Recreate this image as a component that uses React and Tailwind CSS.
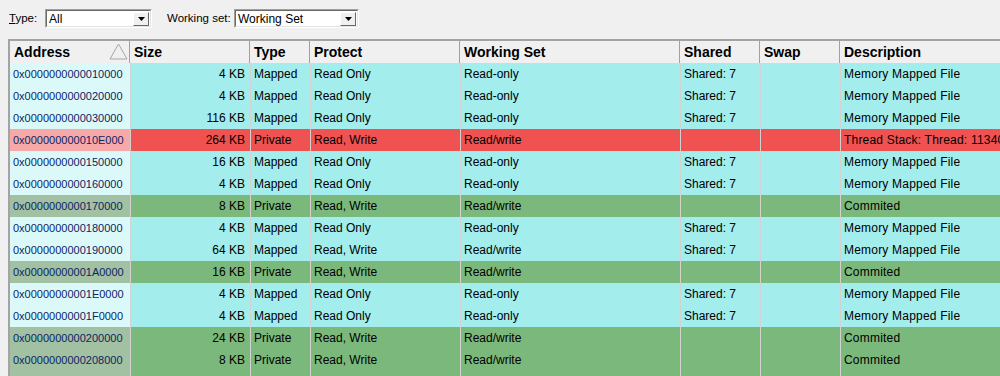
import React from 'react'

const columns = [
	{ key: 'address', label: 'Address', w: 'w-[120px]' },
	{ key: 'size', label: 'Size', w: 'w-[120px]' },
	{ key: 'type', label: 'Type', w: 'w-[60px]' },
	{ key: 'protect', label: 'Protect', w: 'w-[150px]' },
	{ key: 'ws', label: 'Working Set', w: 'w-[220px]' },
	{ key: 'shared', label: 'Shared', w: 'w-[80px]' },
	{ key: 'swap', label: 'Swap', w: 'w-[80px]' },
	{ key: 'desc', label: 'Description', w: 'w-[260px]' },
]

const mapped = (address, size, ro = true) => ({
	kind: 'mapped', address, size, type: 'Mapped',
	protect: ro ? 'Read Only' : 'Read, Write',
	ws: ro ? 'Read-only' : 'Read/write',
	shared: 'Shared: 7', desc: 'Memory Mapped File',
})

const priv = (address, size) => ({
	kind: 'private', address, size, type: 'Private',
	protect: 'Read, Write', ws: 'Read/write', shared: '', desc: 'Commited',
})

const rows = [
	mapped('0x0000000000010000', '4 KB'),
	mapped('0x0000000000020000', '4 KB'),
	mapped('0x0000000000030000', '116 KB'),
	{ kind: 'stack', address: '0x000000000010E000', size: '264 KB', type: 'Private', protect: 'Read, Write', ws: 'Read/write', shared: '', desc: 'Thread Stack: Thread: 11340 Main thread' },
	mapped('0x0000000000150000', '16 KB'),
	mapped('0x0000000000160000', '4 KB'),
	priv('0x0000000000170000', '8 KB'),
	mapped('0x0000000000180000', '4 KB'),
	mapped('0x0000000000190000', '64 KB', false),
	priv('0x00000000001A0000', '16 KB'),
	mapped('0x00000000001E0000', '4 KB'),
	mapped('0x00000000001F0000', '4 KB'),
	priv('0x0000000000200000', '24 KB'),
	priv('0x0000000000208000', '8 KB'),
	// only the top edge of this one shows, its text sits below the window
	{ kind: 'private', address: '', size: '', type: '', protect: '', ws: '', shared: '', desc: '' },
]

const rowBg = {
	mapped: 'bg-[#a3eded]',
	stack: 'bg-[#f05252]',
	private: 'bg-[#7bb87b]',
}

const addrBg = {
	mapped: 'bg-[#dcf9f9]',
	stack: 'bg-[#f7a9a9]',
	private: 'bg-[#a2c0a2]',
}

function Select({ value, width }) {
	return (
		<div className={`${width} shrink-0 h-[19px] bg-white border border-t-[#a0a0a0] border-l-[#a0a0a0] border-b-white border-r-white flex items-center`}>
			<div className="flex-1 h-full border border-t-[#696969] border-l-[#696969] border-b-[#e3e3e3] border-r-[#e3e3e3] flex items-center pl-[2px] pr-[1px]">
				<span className="flex-1 text-[12px] text-black leading-none">{value}</span>
				<div className="w-[16px] h-[14px] bg-[#f0f0f0] border border-t-white border-l-white border-b-[#696969] border-r-[#696969] flex items-center justify-center">
					<svg width="7" height="4" viewBox="0 0 7 4"><polygon points="0,0 7,0 3.5,4" fill="#000" /></svg>
				</div>
			</div>
		</div>
	)
}

export default function App() {
	return (
		<div className="w-[1000px] h-[376px] bg-[#f0f0f0] overflow-hidden" style={{ fontFamily: '"Liberation Sans", Arial, sans-serif' }}>
			{/* toolbar */}
			<div className="h-[39px] flex items-center pl-[9px] pb-[2px] text-[11.5px] text-black">
				<span className="w-[36px] shrink-0"><u>T</u>ype:</span>
				<Select value="All" width="w-[107px]" />
				<span className="w-[67px] shrink-0 ml-[15px]">Working set:</span>
				<Select value="Working Set" width="w-[125px]" />
			</div>

			{/* list */}
			<div className="ml-[8px] border-t-2 border-l-2 border-[#a3a3a3] overflow-hidden">
				<div className="flex h-[22px] bg-[#f0f0f0]">
					{columns.map(col => (
						<div key={col.key} className={`${col.w} shrink-0 relative flex items-center pl-[4px] border-r border-[#a0a0a0] text-[14px] font-bold text-black`}>
							{col.label}
							{col.key === 'address' && (
								<svg className="absolute right-[1px] top-[2px]" width="19" height="17" viewBox="0 0 19 17">
									<polygon points="9.5,1 18,16 1,16" fill="none" stroke="#a7a7a7" strokeWidth="1" />
								</svg>
							)}
						</div>
					))}
				</div>

				{rows.map((r, i) => (
					<div key={i} className={`flex h-[22px] text-[12px] text-black ${rowBg[r.kind]}`}>
						<div className={`w-[120px] shrink-0 flex items-center pl-[3px] text-[11px] text-[#0c2466] ${addrBg[r.kind]}`}>{r.address}</div>
						<div className="w-[120px] shrink-0 flex items-center justify-end pr-[5px] border-l border-[#d2d2d2]">{r.size}</div>
						<div className="w-[60px] shrink-0 flex items-center pl-[3px] border-l border-[#d2d2d2]">{r.type}</div>
						<div className="w-[150px] shrink-0 flex items-center pl-[3px] border-l border-[#d2d2d2]">{r.protect}</div>
						<div className="w-[220px] shrink-0 flex items-center pl-[3px] border-l border-[#d2d2d2]">{r.ws}</div>
						<div className="w-[80px] shrink-0 flex items-center pl-[3px] border-l border-[#d2d2d2]">{r.shared}</div>
						<div className="w-[80px] shrink-0 flex items-center pl-[3px] border-l border-[#d2d2d2]"></div>
						<div className="w-[260px] shrink-0 flex items-center pl-[3px] border-l border-[#d2d2d2] whitespace-nowrap tracking-[0.2px]">{r.desc}</div>
					</div>
				))}
			</div>
		</div>
	)
}
